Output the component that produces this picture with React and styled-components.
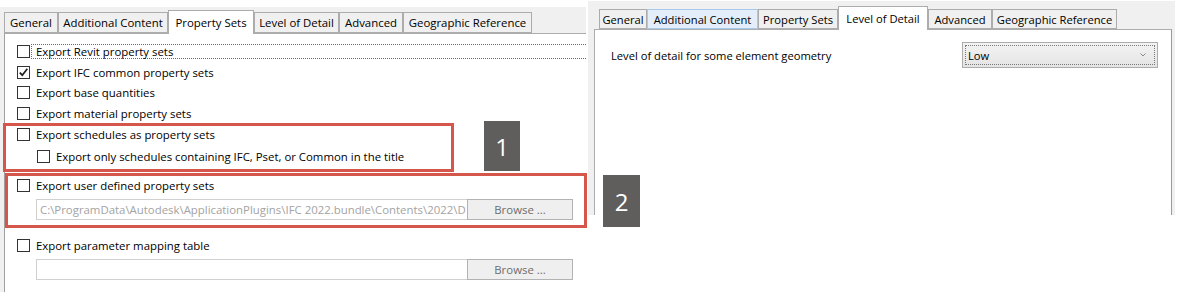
import React from 'react';
import styled, { createGlobalStyle } from 'styled-components';

const GlobalStyle = createGlobalStyle`
  html, body {
    margin: 0;
    padding: 0;
    background: #fff;
  }
  body {
    font-family: 'Open Sans', 'Noto Sans', 'Liberation Sans', sans-serif;
    font-size: 11.4px;
    color: #000;
  }
`;

const leftTabs = [
  { label: 'General', w: 54 },
  { label: 'Additional Content', w: 110 },
  { label: 'Property Sets', w: 86, active: true },
  { label: 'Level of Detail', w: 85 },
  { label: 'Advanced', w: 64 },
  { label: 'Geographic Reference', w: 129 },
];

const rightTabs = [
  { label: 'General', w: 48 },
  { label: 'Additional Content', w: 111, hover: true },
  { label: 'Property Sets', w: 80 },
  { label: 'Level of Detail', w: 90, active: true },
  { label: 'Advanced', w: 64 },
  { label: 'Geographic Reference', w: 125 },
];

// only the part that shows before the Browse button
const PATH =
  'C:\\ProgramData\\Autodesk\\ApplicationPlugins\\IFC 2022.bundle\\Contents\\2022\\D';

const Check = ({ checked }) => (
  <CheckBox>
    {checked && (
      <svg width="11" height="11" viewBox="0 0 11 11">
        <path
          d="M1.8 5.6 L4.3 8.2 L9.3 1.8"
          fill="none"
          stroke="#1e1e1e"
          strokeWidth="1.7"
        />
      </svg>
    )}
  </CheckBox>
);

const Option = ({ label, checked, focus, indent = 12, height }) => (
  <OptionRow $indent={indent} $height={height}>
    <Check checked={checked} />
    <OptionLabel $focus={focus}>{label}</OptionLabel>
  </OptionRow>
);

const FilePicker = ({ value, indent }) => (
  <PickerRow $indent={indent}>
    <PathField>{value}</PathField>
    <BrowseButton>Browse ...</BrowseButton>
  </PickerRow>
);

const Tabs = ({ tabs, variant }) => (
  <TabStrip $variant={variant}>
    {tabs.map((tab) => (
      <Tab
        key={tab.label}
        $w={tab.w}
        $active={tab.active}
        $hover={tab.hover}
        $variant={variant}
      >
        {tab.label}
      </Tab>
    ))}
  </TabStrip>
);

const App = () => {
  return (
    <React.Fragment>
      <GlobalStyle />
      <Page>
        <LeftShot>
          <Tabs tabs={leftTabs} variant="left" />
          <LeftPanel>
            <Option label="Export Revit property sets" focus />
            <Option label="Export IFC common property sets" checked />
            <Option label="Export base quantities" />
            <Option label="Export material property sets" />
            <Highlight $width={451} $left={-2} $top={-1}>
              <Option
                label="Export schedules as property sets"
                indent={11}
                height={17}
              />
              <Option
                label="Export only schedules containing IFC, Pset, or Common in the title"
                indent={31}
                height={26}
              />
            </Highlight>
            <Highlight $width={582} $left={0} $top={1} $bottom={5}>
              <Option
                label="Export user defined property sets"
                indent={9}
                height={18}
              />
              <FilePicker value={PATH} indent={28} />
            </Highlight>
            <Spacer $h={8} />
            <Option label="Export parameter mapping table" height={18} />
            <FilePicker value="" indent={31} />
          </LeftPanel>
        </LeftShot>

        <RightShot>
          <Tabs tabs={rightTabs} variant="right" />
          <RightPanel>
            <SettingRow>
              <SettingLabel>Level of detail for some element geometry</SettingLabel>
              <Combo>
                <ComboFocus>
                  <span>Low</span>
                  <svg width="6" height="4" viewBox="0 0 6 4">
                    <path d="M0.5 0.5 L3 3 L5.5 0.5" fill="none" stroke="#8a8a8a" strokeWidth="1" />
                  </svg>
                </ComboFocus>
              </Combo>
            </SettingRow>
          </RightPanel>
        </RightShot>

        <Badge $x={484} $y={121} $w={36} $h={50}>1</Badge>
        <Badge $x={603} $y={175} $w={37} $h={52}>2</Badge>
      </Page>
    </React.Fragment>
  );
};

export default App;

const Page = styled.div`
  position: relative;
  display: flex;
  align-items: flex-start;
  width: 1180px;
  height: 292px;
  overflow: hidden;
`;

const LeftShot = styled.section`
  display: flex;
  flex-direction: column;
  width: 586px;
  height: 285px;
  margin-top: 7px;
  background: #f0f0f0;
`;

const RightShot = styled.section`
  display: flex;
  flex-direction: column;
  width: 587px;
  height: 214px;
  margin: 1px 0 0 2px;
  background: #f0f0f0;
  font-size: 11.2px;
`;

const TabStrip = styled.div`
  display: flex;
  align-items: flex-end;
  flex: none;
  height: ${({ $variant }) => ($variant === 'left' ? 26 : 28)}px;
  padding-left: ${({ $variant }) => ($variant === 'left' ? 4 : 11)}px;
`;

const Tab = styled.div`
  position: relative;
  z-index: ${({ $active }) => ($active ? 2 : 1)};
  box-sizing: border-box;
  display: flex;
  align-items: center;
  justify-content: center;
  width: ${({ $w }) => $w}px;
  height: ${({ $active, $variant }) =>
    $active ? 24 : $variant === 'left' ? 21 : 20}px;
  margin-bottom: ${({ $active }) => ($active ? -1 : 0)}px;
  padding-bottom: ${({ $active }) => ($active ? 1 : 0)}px;
  border: 1px solid ${({ $hover }) => ($hover ? '#a9c9ec' : '#acacac')};
  border-bottom: ${({ $active }) => ($active ? 'none' : undefined)};
  background: ${({ $active, $hover }) =>
    $active ? '#fff' : $hover ? '#e3eefa' : '#f0f0f0'};
  white-space: nowrap;
`;

const LeftPanel = styled.div`
  flex: 1;
  display: flex;
  flex-direction: column;
  margin-left: 4px;
  padding-top: 7px;
  background: #fff;
  border-top: 1px solid #acacac;
  border-left: 1px solid #a0a0a0;
`;

const RightPanel = styled.div`
  flex: 1;
  margin: 0 3px 0 6px;
  padding: 12px 13px 0 16px;
  background: #fff;
  border: 1px solid #acacac;
  border-bottom: none;
  border-right-color: #9a9a9a;
`;

const OptionRow = styled.div`
  display: flex;
  align-items: center;
  flex: none;
  height: ${({ $height }) => $height || 20.75}px;
  padding-left: ${({ $indent }) => $indent}px;
`;

const CheckBox = styled.span`
  flex: none;
  box-sizing: border-box;
  display: flex;
  align-items: center;
  justify-content: center;
  width: 13px;
  height: 13px;
  border: 1px solid #333;
  background: #fff;
`;

const OptionLabel = styled.span`
  flex: 1;
  box-sizing: border-box;
  height: 15px;
  margin-left: 1px;
  padding-left: 4px;
  line-height: 13px;
  border: 1px dotted ${({ $focus }) => ($focus ? '#6a6a6a' : 'transparent')};
  border-right: none;
  white-space: nowrap;
`;

const Highlight = styled.div`
  box-sizing: border-box;
  width: ${({ $width }) => $width}px;
  margin-left: ${({ $left }) => $left}px;
  margin-top: ${({ $top }) => $top}px;
  padding-bottom: ${({ $bottom }) => $bottom || 0}px;
  border: 3px solid #d5574b;
`;

const Spacer = styled.div`
  flex: none;
  height: ${({ $h }) => $h}px;
`;

const PickerRow = styled.div`
  display: flex;
  flex: none;
  height: 21px;
  margin-top: 5px;
  padding-left: ${({ $indent }) => $indent}px;
`;

const PathField = styled.div`
  box-sizing: border-box;
  width: 432px;
  height: 21px;
  padding: 0 3px;
  line-height: 19px;
  border: 1px solid #d0d0d0;
  color: #a3a3a3;
  white-space: nowrap;
  overflow: hidden;
`;

const BrowseButton = styled.div`
  box-sizing: border-box;
  width: 106px;
  height: 21px;
  margin-left: -1px;
  line-height: 19px;
  text-align: center;
  background: #efefef;
  border: 1px solid #b3b3b3;
  color: #6d6d6d;
`;

const SettingRow = styled.div`
  display: flex;
  align-items: center;
  justify-content: space-between;
`;

const SettingLabel = styled.span`
  white-space: nowrap;
`;

const Combo = styled.div`
  box-sizing: border-box;
  width: 196px;
  height: 26px;
  padding: 2px;
  border: 1px solid #acacac;
  background: linear-gradient(#f3f3f3, #e4e4e4);
`;

const ComboFocus = styled.div`
  box-sizing: border-box;
  display: flex;
  align-items: center;
  justify-content: space-between;
  height: 100%;
  padding: 0 8px 0 2px;
  border: 1px dotted #7a7a7a;
`;

const Badge = styled.div`
  position: absolute;
  left: ${({ $x }) => $x}px;
  top: ${({ $y }) => $y}px;
  width: ${({ $w }) => $w}px;
  height: ${({ $h }) => $h}px;
  display: flex;
  align-items: center;
  justify-content: center;
  background: #5f5e5c;
  color: #fff;
  font-size: 24px;
`;
